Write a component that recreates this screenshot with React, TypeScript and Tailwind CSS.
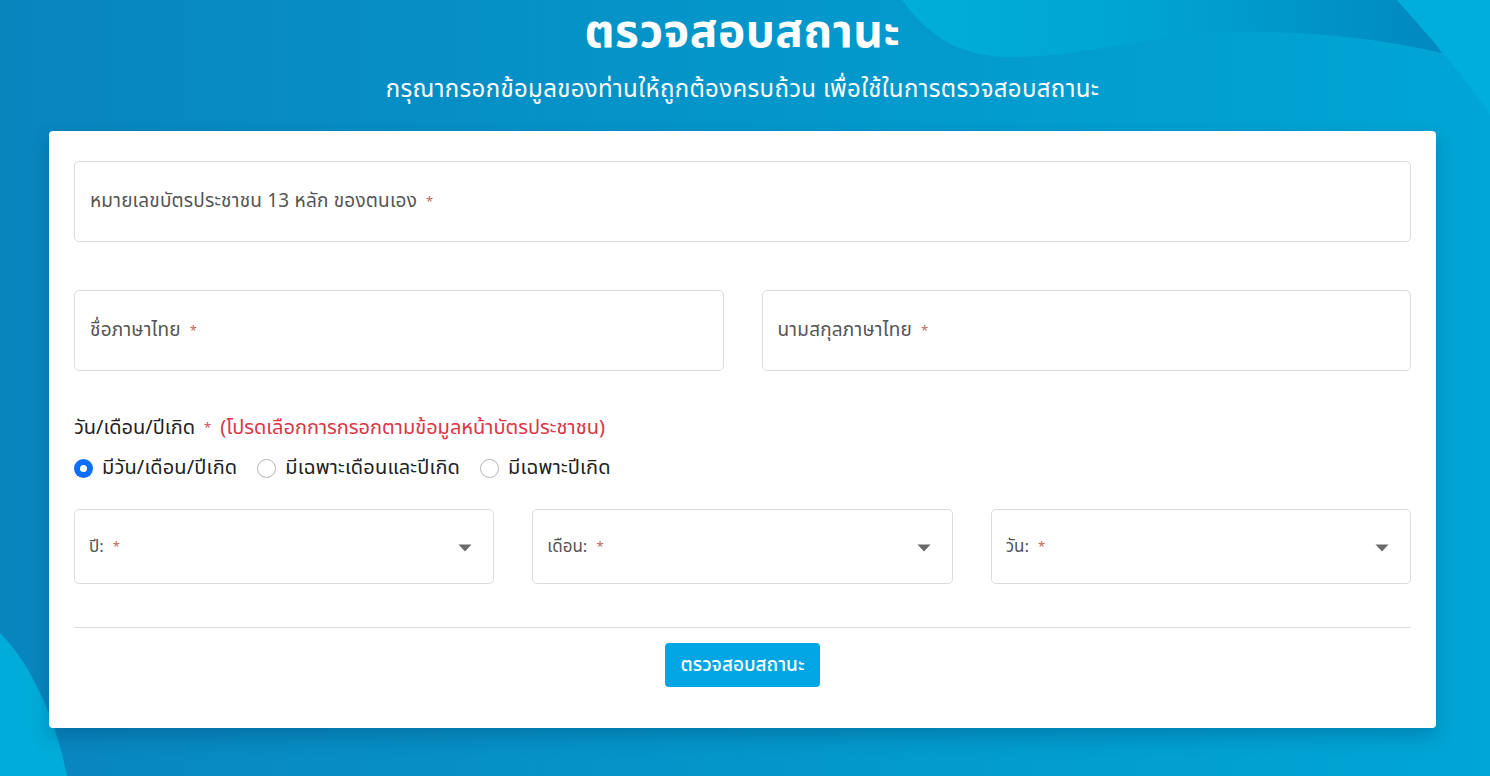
const font = { fontFamily: '"Noto Sans Thai", "Noto Sans", "DejaVu Sans", sans-serif' }

const Star = () => <span className="text-[#c0675c] text-[13px] align-top ml-[9px]">*</span>

const Field = ({ label }: { label: string }) => (
    <div className="flex items-center h-[81px] border border-[#dcdcdc] rounded-[5px] px-[15px]">
        <span className="text-[19px] text-[#555] leading-[24px] tracking-[0.2px]">
            {label}
            <Star />
        </span>
    </div>
)

const SelectBox = ({ label }: { label: string }) => (
    <div className="flex items-center justify-between h-[75px] border border-[#dcdcdc] rounded-[5px] pl-[14px] pr-[21px]">
        <span className="text-[17px] text-[#555] leading-[22px]">
            {label}
            <Star />
        </span>
        <svg width="14" height="8" viewBox="0 0 14 8" className="mt-[2px]">
            <path d="M0.5 0.5 L13.5 0.5 L7 7.5 Z" fill="#6b6b6b" />
        </svg>
    </div>
)

const Radio = ({ label, checked = false }: { label: string; checked?: boolean }) => (
    <label className="flex items-center gap-[9px]">
        {checked ? (
            <span className="w-[19px] h-[19px] rounded-full bg-[#0d6efd] flex items-center justify-center">
                <span className="w-[7px] h-[7px] rounded-full bg-white" />
            </span>
        ) : (
            <span className="w-[19px] h-[19px] rounded-full border border-[#b5b5b5] bg-white" />
        )}
        <span className="text-[20px] text-[#222] leading-[24px] tracking-[0.15px]">{label}</span>
    </label>
)

export default function App() {
    return (
        <div className="relative w-full min-h-[776px] overflow-hidden bg-gradient-to-r from-[#0985be] via-[#0496ca] to-[#00a6d6]" style={font}>
            {/* background waves */}
            <svg className="absolute inset-0 w-full h-full" viewBox="0 0 1490 776" preserveAspectRatio="none">
                <defs>
                    <linearGradient id="topWave" x1="0" y1="0" x2="1" y2="0">
                        <stop offset="0" stopColor="#00aed9" />
                        <stop offset="0.45" stopColor="#00a4d3" />
                        <stop offset="1" stopColor="#0088c1" />
                    </linearGradient>
                </defs>
                <path d="M902 0 C932 42 968 57 1010 57 C1090 57 1150 34 1230 32 C1320 30 1395 42 1442 53 C1428 32 1412 14 1397 0 Z" fill="url(#topWave)" />
                <path d="M1397 0 C1430 38 1462 72 1490 115 L1490 0 Z" fill="#00aedb" />
                <path d="M0 633 C32 665 56 720 67 776 L0 776 Z" fill="#00acd9" />
            </svg>

            <div className="relative flex flex-col items-center pr-[5px]">
                <h1 className="text-[46px] font-bold text-white leading-[66px] tracking-[0.5px]">ตรวจสอบสถานะ</h1>
                <p className="text-[24px] text-white leading-[30px] mt-[9px] tracking-[0.35px]">
                    กรุณากรอกข้อมูลของท่านให้ถูกต้องครบถ้วน เพื่อใช้ในการตรวจสอบสถานะ
                </p>

                <div className="mt-[26px] w-[1387px] bg-white rounded-[4px] shadow-[0_8px_18px_rgba(0,40,80,0.25)] px-[25px] pt-[30px] pb-[41px]">
                    <Field label="หมายเลขบัตรประชาชน 13 หลัก ของตนเอง" />

                    <div className="grid grid-cols-2 gap-[38px] mt-[48px]">
                        <Field label="ชื่อภาษาไทย" />
                        <Field label="นามสกุลภาษาไทย" />
                    </div>

                    <div className="mt-[45px] text-[20px] text-[#222] leading-[24px]">
                        วัน/เดือน/ปีเกิด
                        <span className="text-[#e0485a] text-[13px] align-top ml-[9px]">*</span>
                        <span className="text-[#dc3545] ml-[9px]">(โปรดเลือกการกรอกตามข้อมูลหน้าบัตรประชาชน)</span>
                    </div>

                    <div className="flex items-center gap-[20px] mt-[16px]">
                        <Radio label="มีวัน/เดือน/ปีเกิด" checked />
                        <Radio label="มีเฉพาะเดือนและปีเกิด" />
                        <Radio label="มีเฉพาะปีเกิด" />
                    </div>

                    <div className="grid grid-cols-3 gap-[38px] mt-[29px]">
                        <SelectBox label="ปี:" />
                        <SelectBox label="เดือน:" />
                        <SelectBox label="วัน:" />
                    </div>

                    <div className="border-t border-[#dcdcdc] mt-[43px]" />

                    <div className="flex justify-center mt-[15px]">
                        <button className="h-[44px] w-[155px] rounded-[4px] bg-[#00a6e3] text-white text-[19px] font-medium leading-none">
                            ตรวจสอบสถานะ
                        </button>
                    </div>
                </div>
            </div>
        </div>
    )
}
